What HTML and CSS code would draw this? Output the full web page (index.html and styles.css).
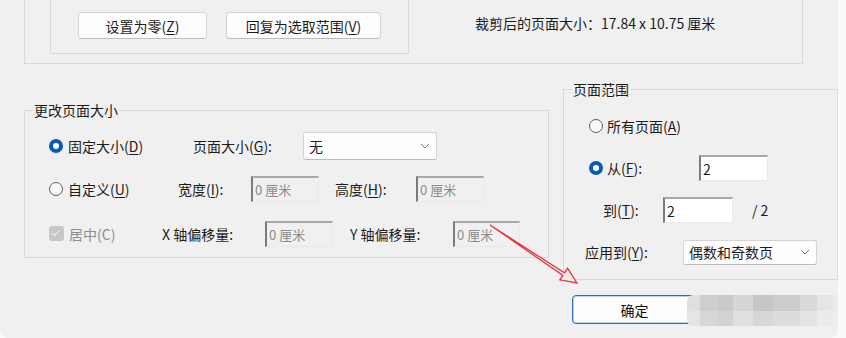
FILE: index.html
```html
<!DOCTYPE html>
<html lang="zh-CN">
<head>
<meta charset="utf-8">
<title>裁剪页面</title>
<link rel="stylesheet" href="styles.css">
</head>
<body>
<div class="dialog">
  <div class="crop-box">
    <div class="margin-box">
      <button class="btn btn-zero">设置为零(<u>Z</u>)</button>
      <button class="btn btn-revert">回复为选取范围(<u>V</u>)</button>
    </div>
    <div class="crop-size">裁剪后的页面大小：17.84 x 10.75 厘米</div>
  </div>

  <div class="lower">
    <fieldset class="group size-group">
      <legend>更改页面大小</legend>
      <div class="row">
        <label class="opt w-fixed"><span class="radio on"></span><span>固定大小(<u>D</u>)</span></label>
        <span class="lbl w-pagesize">页面大小(<u>G</u>):</span>
        <div class="select w-sel-size"><span>无</span><svg class="chev" width="10" height="6" viewBox="0 0 10 6"><polyline points="1,1 5,5 9,1" fill="none" stroke="#7a7a7a" stroke-width="1"/></svg></div>
      </div>
      <div class="row">
        <label class="opt w-custom"><span class="radio"></span><span>自定义(<u>U</u>)</span></label>
        <span class="lbl w-width">宽度(<u>I</u>):</span>
        <div class="field w-in">0 厘米</div>
        <span class="lbl w-height gap16">高度(<u>H</u>):</span>
        <div class="field w-in">0 厘米</div>
      </div>
      <div class="row row3">
        <label class="opt w-center"><span class="check"></span><span class="dis">居中(C)</span></label>
        <span class="lbl w-off">X 轴偏移量:</span>
        <div class="field w-in">0 厘米</div>
        <span class="lbl w-off gap17">Y 轴偏移量:</span>
        <div class="field w-in2">0 厘米</div>
      </div>
    </fieldset>

    <div class="right-col">
      <fieldset class="group range-group">
        <legend>页面范围</legend>
        <div class="row">
          <label class="opt opt-r"><span class="radio"></span><span>所有页面(<u>A</u>)</span></label>
        </div>
        <div class="row">
          <label class="opt opt-r w-from"><span class="radio on"></span><span>从(<u>F</u>):</span></label>
          <div class="field on w-from-in">2</div>
        </div>
        <div class="row">
          <span class="lbl w-to">到(<u>T</u>):</span>
          <div class="field on w-to-in">2</div>
          <span class="total">/ 2</span>
        </div>
        <div class="row">
          <span class="lbl w-apply">应用到(<u>Y</u>):</span>
          <div class="select w-sel-apply"><span>偶数和奇数页</span><svg class="chev" width="10" height="6" viewBox="0 0 10 6"><polyline points="1,1 5,5 9,1" fill="none" stroke="#7a7a7a" stroke-width="1"/></svg></div>
        </div>
      </fieldset>
      <div class="actions">
        <button class="ok">确定</button>
      </div>
    </div>
  </div>

  <div class="mosaic">
    <div class="mc c1"><i></i><i></i></div>
    <div class="mc c2"><i></i><i></i></div>
    <div class="mc c3"><i></i><i></i></div>
    <div class="mc c4"><i></i><i></i></div>
    <div class="mc c5"><i></i><i></i></div>
    <div class="mc c6"><i></i><i></i></div>
    <div class="mc c7"><i></i><i></i></div>
    <div class="mc c8"><i></i><i></i></div>
    <div class="mc c9"><i></i><i></i></div>
  </div>

  <svg class="arrow" width="838" height="338" viewBox="0 0 838 338">
    <polygon points="490,225 564.5,272.9 567.6,268.3 577,283 559.8,279.9 562.9,275.4" fill="#f7e9ea" stroke="#df3a4a" stroke-width="1.3" stroke-linejoin="miter"/>
  </svg>
</div>
</body>
</html>
```

FILE: styles.css
```css
body {
  margin: 0;
  background: #fafafa;
  font-family: "Noto Sans CJK SC", "Noto Sans", sans-serif;
  font-size: 14px;
  color: #1c1c1c;
}

u { text-underline-offset: 2px; }

.dialog {
  position: relative;
  width: 838px;
  height: 338px;
  background: #f0f0f0;
  border-radius: 0 0 8px 8px;
  overflow: hidden;
}

/* top area */
.crop-box {
  margin-left: 24px;
  width: 779px;
  height: 64px;
  box-sizing: border-box;
  border: 1px solid #d9d9d9;
  border-top: none;
  display: flex;
  align-items: flex-start;
}

.margin-box {
  margin-left: 25px;
  width: 359px;
  height: 54px;
  box-sizing: border-box;
  border: 1px solid #d9d9d9;
  border-top: none;
  display: flex;
  align-items: flex-start;
  gap: 19px;
  padding: 12px 0 0 27px;
}

.btn {
  height: 27px;
  padding: 0;
  font: inherit;
  color: inherit;
  background: #fdfdfd;
  border: 1px solid #d3d3d3;
  border-bottom-color: #bdbdbd;
  border-radius: 4px;
  line-height: 24px;
}
.btn-zero { width: 129px; }
.btn-revert { width: 155px; }

.crop-size {
  margin-left: 66px;
  margin-top: 13px;
  line-height: 20px;
}

/* lower area */
.lower {
  display: flex;
  align-items: flex-start;
}

.group {
  margin: 0;
  min-width: 0;
  border: 1px solid #d9d9d9;
  box-sizing: border-box;
}
.group legend {
  padding: 0 1px;
  line-height: 20px;
  font-size: 14px;
}

.size-group {
  margin: 36px 0 0 24px;
  width: 525px;
  padding: 4px 0 2px 24px;
}
.size-group legend { margin-left: -16px; }

.right-col {
  margin: 15px 0 0 14px;
  width: 275px;
}

.range-group {
  width: 275px;
  padding: 6px 0 6px 21px;
}
.range-group legend { margin-left: -13px; }

.row {
  display: flex;
  align-items: center;
  height: 43px;
}
.range-group .row { height: 42px; }

.opt {
  display: flex;
  align-items: center;
  gap: 5px;
  flex: none;
}
.opt-r { gap: 4px; margin-left: 4px; }

.lbl { flex: none; }

.w-fixed { width: 144px; }
.w-pagesize { width: 110px; }
.w-sel-size { width: 134px; height: 28px; }
.w-custom { width: 129px; }
.w-width { width: 73px; }
.w-height { width: 81px; }
.gap16 { margin-left: 16px; }
.gap17 { margin-left: 17px; }
.w-center { width: 113px; }
.w-off { width: 103px; }
.w-in { width: 68px; }
.w-in2 { width: 67px; }

.w-from { width: 110px; }
.w-from-in { width: 69px; height: 27px; }
.w-to { width: 60px; margin-left: 18px; }
.w-to-in { width: 70px; }
.total { margin-left: 19px; }
.w-apply { width: 98px; }
.w-sel-apply { width: 134px; height: 25px; }

.row3 { padding-top: 2px; }

.radio {
  width: 14px;
  height: 14px;
  box-sizing: border-box;
  border-radius: 50%;
  border: 1px solid #5e5e5e;
  background: #f8f8f8;
  flex: none;
  position: relative;
}
.radio.on {
  border: none;
  background: #0b5cad;
}
.radio.on::after {
  content: "";
  position: absolute;
  left: 4px;
  top: 4px;
  width: 6px;
  height: 6px;
  border-radius: 50%;
  background: #fff;
}

.check {
  width: 15px;
  height: 15px;
  border-radius: 3px;
  background: #c7c7c7;
  position: relative;
  flex: none;
}
.check::after {
  content: "";
  position: absolute;
  left: 5px;
  top: 2px;
  width: 3px;
  height: 7px;
  border: solid #f2f2f2;
  border-width: 0 1.5px 1.5px 0;
  transform: rotate(45deg);
}

.dis { color: #8d8d8d; }

.field {
  flex: none;
  box-sizing: border-box;
  height: 26px;
  border-style: solid;
  border-width: 2px 1px 1px 2px;
  border-color: #a9a9a9 #e9e9e9 #e9e9e9 #7b7b7b;
  background: #f0f0f0;
  color: #8b8b8b;
  font-size: 13px;
  padding-left: 2px;
  display: flex;
  align-items: center;
}
.field.on {
  background: #fff;
  color: #1c1c1c;
  font-size: 14px;
}

.select {
  flex: none;
  box-sizing: border-box;
  display: flex;
  align-items: center;
  justify-content: space-between;
  border: 1px solid #d4d4d4;
  border-bottom-color: #bcbcbc;
  border-radius: 3px;
  background: #fdfdfd;
  padding: 0 6px 0 5px;
}
.chev { flex: none; }

.actions {
  display: flex;
  padding: 15px 0 0 9px;
}

.ok {
  width: 125px;
  height: 29px;
  padding: 0;
  font: inherit;
  color: #111;
  background: #fdfdfd;
  border: 1px solid #2d6cb2;
  box-shadow: inset 0 0 0 1px #bcd2ea;
  border-radius: 4px;
}

/* blurred (pixelated) overlay over the hidden cancel button */
.mosaic {
  position: absolute;
  left: 687px;
  top: 295px;
  height: 31px;
  display: flex;
}
.mc { display: flex; flex-direction: column; }
.mc i { display: block; flex: 1; }
.c1 { width: 13px; } .c1 i:nth-child(1) { background: #e0e0e0; border-top-left-radius: 6px; } .c1 i:nth-child(2) { background: #e5e5e5; border-bottom-left-radius: 6px; }
.c2 { width: 17px; } .c2 i:nth-child(1) { background: #cecece; } .c2 i:nth-child(2) { background: #d7d7d7; }
.c3 { width: 16px; } .c3 i:nth-child(1) { background: #cacaca; } .c3 i:nth-child(2) { background: #d3d3d3; }
.c4 { width: 20px; } .c4 i:nth-child(1) { background: #d6d6d6; } .c4 i:nth-child(2) { background: #e0e0e0; }
.c5 { width: 20px; } .c5 i:nth-child(1) { background: #c7c7c7; } .c5 i:nth-child(2) { background: #d7d7d7; }
.c6 { width: 27px; } .c6 i:nth-child(1) { background: #cccccc; } .c6 i:nth-child(2) { background: #dcdcdc; }
.c7 { width: 17px; } .c7 i:nth-child(1) { background: #d9d9d9; } .c7 i:nth-child(2) { background: #e4e4e4; }
.c8 { width: 16px; } .c8 i:nth-child(1) { background: #e5e5e5; } .c8 i:nth-child(2) { background: #ebebeb; }
.c9 { width: 5px; } .c9 i:nth-child(1) { background: #ebebeb; } .c9 i:nth-child(2) { background: #efefef; }

.arrow {
  position: absolute;
  left: 0;
  top: 0;
  pointer-events: none;
}
```
